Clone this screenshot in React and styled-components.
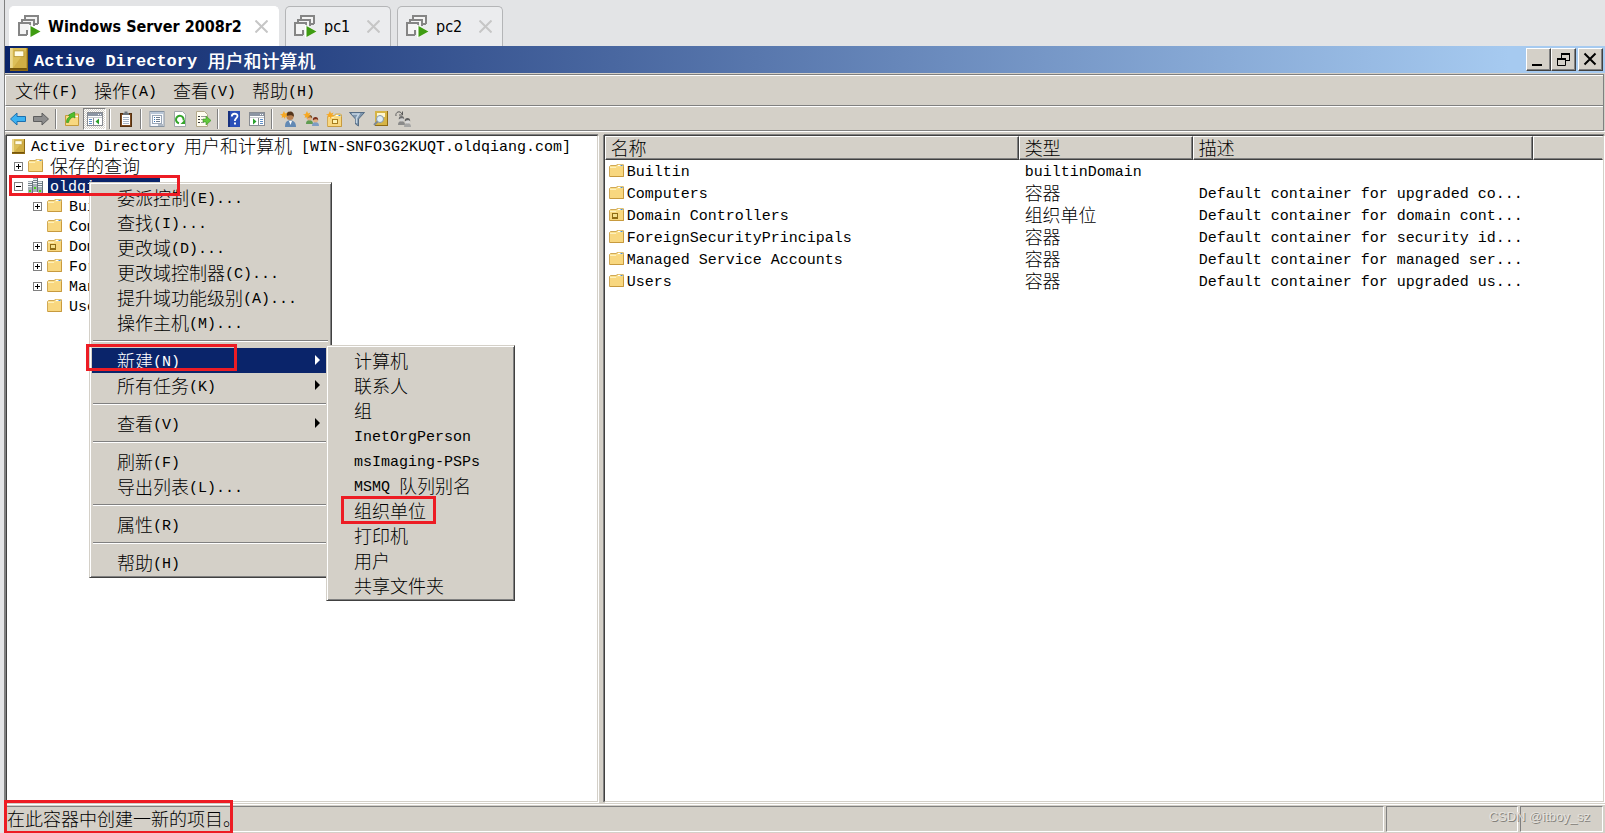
import React from "react";
import styled, { createGlobalStyle, css } from "styled-components";

const face = "#d4d0c8";
const shade = "#808080";
const dark = "#404040";
const navy = "#0a246a";
const red = "#ed1c24";

const GlobalStyle = createGlobalStyle`
  * { box-sizing: border-box; }
  body { margin: 0; background: #e3e4e6; color: #000; }
  body, button, input, table { font: 15px/20px "Liberation Mono", "Noto Sans CJK SC", monospace; }
  button { color: inherit; border: 0; padding: 0; margin: 0; background: none; cursor: default; }
  ul { list-style: none; margin: 0; padding: 0; }
  svg { display: block; flex: none; }
`;

/* ---------- text ---------- */

const Line = styled.span`
  display: inline-block;
  vertical-align: top;
  padding-top: 4px;
  line-height: 16px;
  white-space: pre;
`;
const Han = styled.span`
  font-family: "Noto Sans CJK SC", sans-serif;
  font-size: 18px;
  font-weight: ${(p) => (p.$bold ? 500 : 300)};
  line-height: 0;
  vertical-align: -2px;
`;

function Text({ children, bold }) {
  const runs = children.split(/([\u3000-\u9fff]+)/).filter(Boolean);
  return (
    <Line>
      {runs.map((r, i) => (/[\u3000-\u9fff]/.test(r) ? <Han key={i} $bold={bold}>{r}</Han> : r))}
    </Line>
  );
}

/* ---------- layout ---------- */

const Page = styled.div`
  min-height: 100vh;
  display: flex;
  flex-direction: column;
`;
const TabBar = styled.nav`
  display: flex;
  align-items: flex-end;
  gap: 6px;
  height: 46px;
  margin-left: 4px;
  padding-left: 4px;
  border-left: 1px solid ${shade};
`;
const Tab = styled.div`
  display: flex;
  align-items: center;
  width: ${(p) => (p.$active ? 270 : 106)}px;
  height: 40px;
  padding: 0 10px 0 8px;
  border: 1px solid ${(p) => (p.$active ? "#fff" : "#b4b5b7")};
  border-bottom: 0;
  border-radius: 5px 5px 0 0;
  background: ${(p) => (p.$active ? "#fff" : "#ebecee")};
`;
const TabName = styled.button`
  flex: 1;
  display: flex;
  align-items: center;
  gap: 7px;
  white-space: nowrap;
  font-family: "DejaVu Sans Condensed", "DejaVu Sans", sans-serif;
  font-size: 16px;
  font-stretch: condensed;
  font-weight: ${(p) => (p.$active ? 700 : 400)};
`;
const Window = styled.main`
  flex: 1;
  display: flex;
  flex-direction: column;
  margin-left: 4px;
  border-left: 1px solid ${shade};
  background: ${face};
`;
const TitleBar = styled.header`
  display: flex;
  align-items: center;
  height: 27px;
  padding: 0 2px 0 5px;
  color: #fff;
  background: linear-gradient(90deg, ${navy}, #a6caf0 94%);
`;
const Title = styled.h1`
  flex: 1;
  margin: 0 0 0 6px;
  font-size: 17px;
  line-height: 20px;
  font-weight: 700;
`;
const Buttons = styled.div`
  display: flex;
`;
const CaptionButton = styled.button`
  display: grid;
  place-items: center;
  width: 25px;
  height: 23px;
  margin-left: ${(p) => (p.$apart ? 2 : 0)}px;
  background: ${face};
  border: 1px solid;
  border-color: #fff ${dark} ${dark} #fff;
  box-shadow: inset -1px -1px ${shade};
`;
const Bars = styled.div`
  margin: 1px 1px 0 0;
  border: 1px solid ${shade};
  border-left: 0;
`;
const Bar = styled.div`
  display: flex;
  align-items: center;
  border-top: 1px solid #fff;
  border-left: 1px solid #fff;
`;
const MenuBar = styled(Bar)`
  gap: 2px;
  height: 31px;
  padding-left: 2px;
  border-bottom: 1px solid ${shade};
`;
const MenuBarItem = styled.button`
  padding: 0 7px;
`;
const ToolBar = styled(Bar)`
  height: 24px;
`;
const Tool = styled.button`
  display: grid;
  place-items: center;
  width: 23px;
  height: 22px;
  ${(p) =>
    p.$pressed &&
    css`
      border: 1px solid;
      border-color: ${shade} #fff #fff ${shade};
      background: repeating-conic-gradient(#fff 0 25%, ${face} 0 50%) 0 0 / 2px 2px;
    `}
`;
const Separator = styled.span`
  width: 2px;
  height: 20px;
  margin: 0 3px;
  border-left: 1px solid ${shade};
  border-right: 1px solid #fff;
`;
const Panes = styled.div`
  flex: 1;
  display: flex;
  gap: 5px;
  padding: 2px 1px 0 0;
  border-top: 1px solid #fff;
`;
const Pane = styled.section`
  position: relative;
  min-width: 0;
  margin: 1px 0 0 1px;
  background: #fff;
  border: 1px solid;
  border-color: ${dark} ${face} ${face} ${dark};
  box-shadow: 0 -1px ${shade}, -1px 0 ${shade}, 1px 1px #fff;
`;
const TreePane = styled(Pane)`
  flex: 0 0 37%;
`;
const ListPane = styled(Pane)`
  flex: 1;
  margin-left: 1px;
`;

/* ---------- tree ---------- */

const TreeRow = styled.div`
  position: relative;
  display: flex;
  align-items: center;
  height: 20px;
  padding-left: ${(p) => [5, 7, 26][p.$level]}px;
`;
const Expander = styled.button`
  width: 9px;
  height: 9px;
  margin-right: 5px;
  visibility: ${(p) => (p.$hidden ? "hidden" : "visible")};
`;
const TreeLabel = styled.span`
  display: flex;
  margin-left: ${(p) => (p.$root ? 4 : 5)}px;
  padding: 0 2px;
  ${(p) => p.$selected && css`background: ${navy}; color: #fff;`}
`;

/* ---------- menus ---------- */

const PopupMenu = styled.div`
  position: absolute;
  z-index: 1;
  padding: 2px;
  background: ${face};
  border: 1px solid;
  border-color: ${face} ${dark} ${dark} ${face};
  box-shadow: inset 1px 1px #fff, inset -1px -1px ${shade};
`;
const ContextMenu = styled(PopupMenu)`
  left: 82px;
  top: 46px;
  width: 243px;
`;
const SubMenu = styled(PopupMenu)`
  left: 234px;
  top: -3px;
  width: 189px;
`;
const ItemSlot = styled.div`
  position: relative;
`;
const Item = styled.button`
  display: flex;
  align-items: center;
  justify-content: space-between;
  width: 100%;
  height: 25px;
  padding: 0 9px 0 25px;
  ${(p) => p.$active && css`background: ${navy}; color: #fff;`}
`;
const Rule = styled.hr`
  margin: 5px 1px 6px;
  border: 0;
  border-top: 1px solid ${shade};
  border-bottom: 1px solid #fff;
`;

const Highlight = styled.span`
  position: absolute;
  z-index: 2;
  left: ${(p) => p.$x}px;
  top: ${(p) => p.$y}px;
  width: ${(p) => p.$w}px;
  height: ${(p) => p.$h}px;
  border: 3px solid ${red};
  pointer-events: none;
`;

/* ---------- list ---------- */

const Table = styled.table`
  width: 100%;
  table-layout: fixed;
  border-collapse: separate;
  border-spacing: 0;
`;
const Th = styled.th`
  height: 24px;
  padding: 0 5px;
  text-align: left;
  font-weight: 400;
  background: ${face};
  border: 1px solid;
  border-color: #fff ${dark} ${dark} #fff;
  box-shadow: inset -1px -1px ${shade};
  &:last-child { border-right-color: ${face}; box-shadow: inset 0 -1px ${shade}; }
`;
const Td = styled.td`
  height: 22px;
  padding: 0 6px;
  white-space: nowrap;
  &:first-child { padding-left: 4px; }
`;
const NameCell = styled.span`
  display: flex;
  align-items: center;
  gap: 3px;
`;

/* ---------- status bar ---------- */

const StatusBar = styled.footer`
  position: relative;
  display: flex;
  gap: 2px;
  margin-top: 2px;
  padding: 1px 2px 1px 1px;
  border-top: 1px solid #fff;
`;
const StatusPanel = styled.div`
  flex: ${(p) => (p.$w ? `0 0 ${p.$w}px` : 1)};
  display: flex;
  align-items: center;
  height: 26px;
  border: 1px solid;
  border-color: ${shade} #fff #fff ${(p) => (p.$w ? shade : face)};
`;
const Watermark = styled.span`
  position: absolute;
  right: 15px;
  top: 2px;
  font: 13px/20px "Liberation Sans", sans-serif;
  color: #e4e2de;
  text-shadow: 1px 1px #85827c;
`;

/* ---------- icons ---------- */

const Svg = ({ size = 16, w, h, children }) => (
  <svg width={w || size} height={h || size} viewBox={`0 0 ${w || size} ${h || size}`} aria-hidden="true">
    {children}
  </svg>
);

const VmIcon = () => (
  <Svg size={23}>
    <g fill="#f4f4f4" stroke="#858585" strokeWidth="2">
      <path d="M7 5V1h13v8M20 9h-5" />
      <path d="M4 8V5h12v6" />
      <path d="M9 20H1V8h11v4" />
      <path d="M9 20v-5" fill="none" />
    </g>
    <path d="M11 9.500v13.500l12-6.500z" fill="#fff" />
    <path d="M12.500 11v11l10-5.500z" fill="#3f9c12" />
  </Svg>
);
const TabCloseIcon = () => (
  <Svg size={13}><path d="M0.500 0.500l12 12M12.500 0.500l-12 12" stroke="#c6c6c6" strokeWidth="2" /></Svg>
);
const BookIcon = ({ big }) => (
  <svg width={big ? 18 : 13} height={big ? 23 : 15} viewBox="0 0 13 16" preserveAspectRatio="none" aria-hidden="true">
    <rect width="13" height="16" fill="#8f6b14" />
    <rect width="12" height="14" fill="#dcbf58" />
    <path d="M0 0h2v14H0z" fill="#ecd88c" />
    <path d="M2 14h10V1z" fill="#c09a2e" opacity=".45" />
    <rect x="3" y="2" width="7" height="4" fill="#fffce6" stroke="#b8962f" strokeWidth=".6" />
    <path d="M0 14.500h12" stroke="#6d4f08" />
  </svg>
);
const FolderShape = () => (
  <>
    <path d="M.5 13.500V3.500l1-1h6l1-1.500h5l1 1v11.500z" fill="#fbe08c" stroke="#d0a855" />
    <path d="M1 4.500h7l1.500-1H14V13H1z" fill="#f8d77f" />
    <path d="M1 4.500h6" stroke="#fdf0bd" />
    <path d="M9 2.500h3" stroke="#fff" />
    <path d="M11.500 2.500h2" stroke="#4a8fd8" />
    <path d="M14.500 4v9.500H1" stroke="#c79a3e" fill="none" />
  </>
);
const FolderIcon = ({ ou }) => (
  <Svg w={15} h={15}>
    <g transform="translate(0 -1)">
      <FolderShape />
      {ou && (
        <>
          <rect x="3" y="6" width="6" height="6" fill="#8f6b14" />
          <rect x="4" y="7" width="4" height="3" fill="#f4e08e" />
        </>
      )}
    </g>
  </Svg>
);
const DomainIcon = () => (
  <Svg w={15} h={16}>
    {[[5, 0], [0, 3], [10, 3]].map(([x, y]) => (
      <g key={x}>
        <rect x={x} y={y} width="5" height={y ? 12 : 14} fill="#a7b1b8" />
        <path d={`M${x} ${y + 1.500}h4M${x} ${y + 3.500}h4M${x} ${y + 5.500}h4`} stroke="#eef2f4" />
        <path d={`M${x} ${y + 2.500}h4M${x} ${y + 4.500}h4`} stroke="#75828b" />
        <path d={`M${x + 4.500} ${y}v${y ? 12 : 14}`} stroke="#65727b" />
        <rect x={x + 1} y={y + 9} width="2" height="2" fill="#4bd11f" />
      </g>
    ))}
  </Svg>
);
const ExpandIcon = ({ open }) => (
  <Svg size={9}>
    <rect x=".5" y=".5" width="8" height="8" fill="#fff" stroke="#808080" />
    <path d={open ? "M2 4.500h5" : "M2 4.500h5M4.500 2v5"} stroke="#000" />
  </Svg>
);
const ArrowIcon = () => (
  <Svg w={5} h={12}><path d="M0 0l5 5-5 5z" fill="currentColor" /></Svg>
);

const PanelShape = ({ right }) => (
  <>
    <rect x=".5" y="1.500" width="15" height="13" fill="#fff" stroke="#888c92" />
    <rect x="1" y="2" width="14" height="3" fill="#8b95a3" />
    <path d="M11 3.500h1M13 3.500h1" stroke="#fff" />
    <path d="M1 6.500h14" stroke="#c7cbd0" />
    {right ? (
      <>
        <path d="M9.500 7v7" stroke="#888c92" />
        <path d="M11 8.500h3M11 10.500h3M11 12.500h3" stroke="#5f8fc6" />
        <path d="M4 7.500v6l3.500-3z" fill="#2ba12b" />
      </>
    ) : (
      <>
        <path d="M6.500 7v7" stroke="#888c92" />
        <path d="M2 8.500h3M2 10.500h3M2 12.500h3" stroke="#5f8fc6" />
        <path d="M12 7.500v6l-3.500-3z" fill="#2ba12b" />
      </>
    )}
  </>
);
const Star = () => (
  <path d="M4 0l1 2.600L7.500 1.500 6.300 4 8 5.500l-2.500.2L5 8 3.500 6 1.500 7l.8-2.200L0 3.500l2.500-.6z" fill="#f7a823" />
);
const Head = ({ x, y, hair, body, skin = "#e0b083" }) => (
  <g transform={`translate(${x} ${y})`}>
    <path d="M0 9c0-3 1.500-4 3.500-4S7 6 7 9z" fill={body} />
    <circle cx="3.500" cy="3" r="2.500" fill={skin} />
    <path d="M.8 3.500C.5 1 2 0 3.500 0S6.500 1 6.200 3.500C5.500 1.800 2.500 2 .8 3.500z" fill={hair} />
  </g>
);
const ToolIcon = ({ name }) => {
  const art = {
    back: <path d="M.5 8L7 2v3.500h8.500v5H7V14z" fill="#3cb2f2" stroke="#1c6fae" />,
    forward: <path d="M15.500 8L9 2v3.500H.5v5H9V14z" fill="#8d8d8d" stroke="#5d5d5d" />,
    up: (
      <>
        <path d="M1.500 14.500V4.500h5l1-1.500h7v11.500z" fill="#f8d880" stroke="#c49a3c" />
        <path d="M11 5.500h3" stroke="#fff" />
        <path d="M2.500 11.500c0-3.500 1-5 3.500-5.500L4.500 4l6-3 .5 6-2-1C6.500 7 5 9 4.500 11.500z" fill="#4fc02c" stroke="#2e8a18" strokeWidth=".6" />
      </>
    ),
    tree: <PanelShape />,
    clipboard: (
      <>
        <rect x="2.500" y="2.500" width="11" height="13" fill="#7d4a1f" stroke="#54300f" />
        <rect x="4" y="4" width="8" height="10" fill="#fff" />
        <path d="M5 6.500h6M5 8.500h6M5 10.500h6M5 12.500h6" stroke="#a9b6c6" />
        <path d="M5 4V2h1.500V.5h3V2H11v2z" fill="#6c7278" />
      </>
    ),
    properties: (
      <>
        <rect x="1" y=".5" width="14" height="15" fill="#f6f8fb" stroke="#8794a3" />
        <path d="M2 2h12" stroke="#b9c7d8" strokeWidth="2" />
        <rect x="3.500" y="4.500" width="9" height="8" fill="#fff" stroke="#9aa7b8" />
        <path d="M5 6.500h1M5 8.500h1M5 10.500h1" stroke="#3574b8" />
        <path d="M7 6.500h4M7 8.500h4M7 10.500h4M9 14h5" stroke="#6d7d90" />
      </>
    ),
    refresh: (
      <>
        <path d="M2.500.5h8l3 3v12h-11z" fill="#fff" stroke="#a2a6aa" />
        <path d="M7 12.300A3.800 3.800 0 1 1 11.500 9.500" fill="none" stroke="#35a52b" strokeWidth="2" />
        <path d="M13 8.500v4.500H8.500z" fill="#35a52b" />
      </>
    ),
    export: (
      <>
        <path d="M1.500.5h8l3 3v12h-11z" fill="#fffdf0" stroke="#b3a98a" />
        <path d="M3 5.500h2M3 8.500h2M3 11.500h2" stroke="#3b3b3b" />
        <path d="M6 5.500h5M6 8.500h3M6 11.500h3" stroke="#9b9b9b" />
        <path d="M8 8h3V5l5 4.500-5 4.500v-3H8z" fill="#63c83c" stroke="#379420" strokeWidth=".6" />
      </>
    ),
    help: (
      <>
        <rect x="2" y="0" width="12" height="16" fill="#2b50b8" />
        <path d="M2 0h2v16H2z" fill="#17307e" />
        <path d="M5.800 5.500C5.800 1.800 11.500 2 11.500 5c0 2-2.700 2.300-2.700 5" fill="none" stroke="#fff" strokeWidth="1.800" />
        <rect x="8" y="11.500" width="2" height="2" fill="#fff" />
      </>
    ),
    actions: <PanelShape right />,
    user: (
      <>
        <path d="M5 16c0-5 1.500-6.500 5-6.500s6 1.500 6 6.500z" fill="#6289b4" />
        <path d="M9 10l1.500 4L12 10z" fill="#fff" />
        <circle cx="10" cy="5.500" r="3.600" fill="#b98050" />
        <path d="M6.500 5C6 1 9 .5 10.500.500S14.500 2 13.800 6C13 4 10 3.500 6.500 5z" fill="#54351c" />
        <Star />
      </>
    ),
    group: (
      <>
        <Head x={3} y={4} hair="#6a4220" body="#5f9c52" />
        <Head x={9} y={6} hair="#7b2f1c" body="#7d9cc4" />
        <Star />
      </>
    ),
    ou: (
      <>
        <g transform="translate(1 2)"><FolderShape /></g>
        <rect x="6.500" y="8.500" width="5" height="4" fill="#fff3b0" stroke="#a67c1c" />
        <Star />
      </>
    ),
    filter: (
      <>
        <path d="M.5 1.500h15l-6 6.500v7l-3-2V8z" fill="#7f97ae" stroke="#566d85" />
        <path d="M3 3h7L7.500 7v5" fill="none" stroke="#c5d5e4" strokeWidth="1.500" />
      </>
    ),
    find: (
      <>
        <rect x="3" y="0" width="13" height="15" fill="#d6b445" />
        <path d="M3 14.500h13M15.500 0v15" stroke="#8f6b14" />
        <rect x="5" y="2" width="8" height="4" fill="#fff7d0" />
        <circle cx="8" cy="8" r="3.500" fill="#dcecf8" stroke="#8798a8" />
        <path d="M5.500 10.500L2 14" stroke="#7f8a94" strokeWidth="2" />
      </>
    ),
    members: (
      <>
        <Head x={3} y={5} hair="#6e6e6e" body="#8a8a8a" skin="#cfcfcf" />
        <Head x={9} y={7} hair="#5e5e5e" body="#a5a5a5" skin="#d9d9d9" />
        <path d="M1 5c-1-4 4-6 6-2M7.500.5V4H4" fill="none" stroke="#5a5a5a" />
      </>
    ),
  };
  return <Svg>{art[name]}</Svg>;
};

/* ---------- data ---------- */

const tabs = ["Windows Server 2008r2", "pc1", "pc2"];
const menuBar = ["文件(F)", "操作(A)", "查看(V)", "帮助(H)"];
const tools = [
  ["back", "后退"], ["forward", "前进"], null,
  ["up", "上一级"], ["tree", "显示/隐藏控制台树"], null,
  ["clipboard", "剪切"], null,
  ["properties", "属性"], ["refresh", "刷新"], ["export", "导出列表"], null,
  ["help", "帮助"], ["actions", "显示/隐藏操作窗格"], null,
  ["user", "新建用户"], ["group", "新建组"], ["ou", "新建组织单位"],
  ["filter", "筛选器"], ["find", "查找"], ["members", "添加到组"],
];
const treeChildren = [
  { name: "Builtin", expandable: true },
  { name: "Computers" },
  { name: "Domain Controllers", expandable: true, ou: true },
  { name: "ForeignSecurityPrincipals", expandable: true },
  { name: "Managed Service Accounts", expandable: true },
  { name: "Users" },
];
const contextGroups = [
  ["委派控制(E)...", "查找(I)...", "更改域(D)...", "更改域控制器(C)...", "提升域功能级别(A)...", "操作主机(M)..."],
  ["新建(N)", "所有任务(K)"],
  ["查看(V)"],
  ["刷新(F)", "导出列表(L)..."],
  ["属性(R)"],
  ["帮助(H)"],
];
const withArrow = ["新建(N)", "所有任务(K)", "查看(V)"];
const newItems = ["计算机", "联系人", "组", "InetOrgPerson", "msImaging-PSPs", "MSMQ 队列别名", "组织单位", "打印机", "用户", "共享文件夹"];
const columns = [["名称", 414], ["类型", 174], ["描述", 340], ["", null]];
const rows = [
  ["Builtin", "builtinDomain", ""],
  ["Computers", "容器", "Default container for upgraded co..."],
  ["Domain Controllers", "组织单位", "Default container for domain cont..."],
  ["ForeignSecurityPrincipals", "容器", "Default container for security id..."],
  ["Managed Service Accounts", "容器", "Default container for managed ser..."],
  ["Users", "容器", "Default container for upgraded us..."],
];

/* ---------- parts ---------- */

const NewSubMenu = () => (
  <SubMenu role="menu" aria-label="新建">
    {newItems.map((label) => (
      <ItemSlot key={label}>
        <Item role="menuitem"><Text>{label}</Text></Item>
        {label === "组织单位" && <Highlight $x={12} $y={-2} $w={95} $h={28} />}
      </ItemSlot>
    ))}
  </SubMenu>
);

const TreeMenu = () => (
  <ContextMenu role="menu">
    {contextGroups.map((group, g) => (
      <React.Fragment key={g}>
        {g > 0 && <Rule />}
        {group.map((label) => {
          const open = label === "新建(N)";
          return (
            <ItemSlot key={label}>
              <Item role="menuitem" $active={open}>
                <Text>{label}</Text>
                {withArrow.includes(label) && <ArrowIcon />}
              </Item>
              {open && <NewSubMenu />}
              {open && <Highlight $x={-6} $y={-4} $w={151} $h={27} />}
            </ItemSlot>
          );
        })}
      </React.Fragment>
    ))}
  </ContextMenu>
);

const Tree = () => (
  <ul role="tree">
    <li role="treeitem">
      <TreeRow $level={0}>
        <BookIcon />
        <TreeLabel $root><Text>Active Directory 用户和计算机 [WIN-SNFO3G2KUQT.oldqiang.com]</Text></TreeLabel>
      </TreeRow>
    </li>
    <li role="treeitem">
      <TreeRow $level={1}>
        <Expander aria-label="展开"><ExpandIcon /></Expander>
        <FolderIcon />
        <TreeLabel><Text>保存的查询</Text></TreeLabel>
      </TreeRow>
    </li>
    <li role="treeitem">
      <TreeRow $level={1}>
        <Expander aria-label="折叠"><ExpandIcon open /></Expander>
        <DomainIcon />
        <TreeLabel $selected><Text>oldqiang.com</Text></TreeLabel>
        <Highlight $x={2} $y={-1} $w={171} $h={21} />
      </TreeRow>
      <ul role="group">
        {treeChildren.map((c) => (
          <li role="treeitem" key={c.name}>
            <TreeRow $level={2}>
              <Expander aria-label="展开" $hidden={!c.expandable}><ExpandIcon /></Expander>
              <FolderIcon ou={c.ou} />
              <TreeLabel><Text>{c.name}</Text></TreeLabel>
            </TreeRow>
          </li>
        ))}
      </ul>
    </li>
  </ul>
);

export default function App() {
  return (
    <Page>
      <GlobalStyle />
      <TabBar>
        {tabs.map((t, i) => (
          <Tab key={t} $active={i === 0}>
            <TabName $active={i === 0}><VmIcon />{t}</TabName>
            <button aria-label="关闭"><TabCloseIcon /></button>
          </Tab>
        ))}
      </TabBar>
      <Window>
        <TitleBar>
          <BookIcon big />
          <Title><Text bold>Active Directory 用户和计算机</Text></Title>
          <Buttons>
            <CaptionButton aria-label="最小化">
              <Svg size={15}><path d="M1 13h10" stroke="#000" strokeWidth="2" /></Svg>
            </CaptionButton>
            <CaptionButton aria-label="还原">
              <Svg size={15}>
                <path
                  d="M5 1.500h9M5 2.500h9M5.500 2v4M13.500 2v7M14 8.500h-4M1 6.500h9M1 7.500h9M1.500 7v6.500h8V7"
                  fill="none"
                  stroke="#000"
                />
              </Svg>
            </CaptionButton>
            <CaptionButton aria-label="关闭" $apart>
              <Svg size={15}><path d="M1.500 1.500l11 11M12.500 1.500l-11 11" stroke="#000" strokeWidth="2" /></Svg>
            </CaptionButton>
          </Buttons>
        </TitleBar>
        <Bars>
          <MenuBar role="menubar">
            {menuBar.map((m) => <MenuBarItem key={m} role="menuitem"><Text>{m}</Text></MenuBarItem>)}
          </MenuBar>
          <ToolBar role="toolbar">
            {tools.map((t, i) =>
              t ? (
                <Tool key={i} aria-label={t[1]} $pressed={t[0] === "tree"}><ToolIcon name={t[0]} /></Tool>
              ) : (
                <Separator key={i} />
              )
            )}
          </ToolBar>
        </Bars>
        <Panes>
          <TreePane>
            <Tree />
            <TreeMenu />
          </TreePane>
          <ListPane>
            <Table>
              <colgroup>
                {columns.map(([, w], i) => <col key={i} width={w || undefined} />)}
              </colgroup>
              <thead>
                <tr>{columns.map(([c], i) => <Th key={i} scope="col">{c && <Text>{c}</Text>}</Th>)}</tr>
              </thead>
              <tbody>
                {rows.map(([name, type, desc]) => (
                  <tr key={name}>
                    <Td>
                      <NameCell><FolderIcon ou={name === "Domain Controllers"} /><Text>{name}</Text></NameCell>
                    </Td>
                    <Td><Text>{type}</Text></Td>
                    <Td><Text>{desc}</Text></Td>
                    <Td />
                  </tr>
                ))}
              </tbody>
            </Table>
          </ListPane>
        </Panes>
        <StatusBar>
          <StatusPanel><Text>在此容器中创建一新的项目。</Text></StatusPanel>
          <StatusPanel $w={132} />
          <StatusPanel $w={83} />
          <Highlight $x={-1} $y={-5} $w={229} $h={34} />
          <Watermark>CSDN @itboy_sz</Watermark>
        </StatusBar>
      </Window>
    </Page>
  );
}
